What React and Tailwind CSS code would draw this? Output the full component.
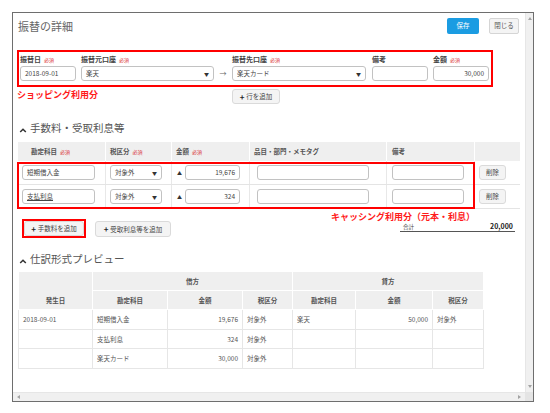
import React from "react";

const Req = () => (
  <span className="ml-[3px] text-[5px] font-normal text-[#d9343a]">必須</span>
);

const Input = ({ className = "", value = "", right = false, underline = false }) => (
  <div
    className={`h-[15px] border border-[#c2c2c2] rounded-[3px] bg-white flex items-center px-[4px] text-[6.5px] text-[#444] leading-none ${
      right ? "justify-end" : ""
    } ${className}`}
  >
    <span className={underline ? "underline" : ""}>{value}</span>
  </div>
);

const Select = ({ className = "", value }) => (
  <div
    className={`h-[15px] border border-[#c2c2c2] rounded-[3px] bg-white flex items-center pl-[4px] pr-[4px] text-[6.5px] text-[#444] leading-none ${className}`}
  >
    <span>{value}</span>
    <span className="ml-auto text-[5px] text-[#333]">▼</span>
  </div>
);

const Btn = ({ className = "", children }) => (
  <div
    className={`h-[15px] bg-[#f4f4f4] border border-[#dadada] rounded-[3px] flex items-center justify-center text-[6.5px] text-[#444] leading-none ${className}`}
  >
    {children}
  </div>
);

const Plus = () => <span className="mr-[2px] text-[8px] font-bold text-[#222]">+</span>;

const Chevron = () => (
  <svg width="8" height="6" viewBox="0 0 8 6" className="mt-[3px]">
    <path d="M1.2 5 L4 2.2 L6.8 5" fill="none" stroke="#333" strokeWidth="1.5" />
  </svg>
);

const Section = ({ title, className = "" }) => (
  <div className={`ml-[6px] h-[14px] flex items-center gap-[3px] ${className}`}>
    <Chevron />
    <span className="text-[10.5px] text-[#555] leading-none">{title}</span>
  </div>
);

const Label = ({ children, req }) => (
  <div className="h-[9px] flex items-center text-[7px] font-bold text-[#444] leading-none">
    {children}
    {req && <Req />}
  </div>
);

const feeRows = [
  { account: "短期借入金", amount: "19,676", underline: false },
  { account: "支払利息", amount: "324", underline: true },
];

const preview = [
  ["2018-09-01", "短期借入金", "19,676", "対象外", "楽天", "50,000", "対象外"],
  ["", "支払利息", "324", "対象外", "", "", ""],
  ["", "楽天カード", "30,000", "対象外", "", "", ""],
];

export default function App() {
  return (
    <div className="w-[550px] h-[413px] bg-white font-['Noto_Sans_CJK_JP','Noto_Sans',sans-serif] pt-[12px] pl-[12px]">
      <div className="w-[522px] h-[390px] border border-[#6e6e6e] flex flex-col">
        <div className="flex flex-1 min-h-0">
          {/* content */}
          <div className="flex-1 overflow-hidden">
            {/* title */}
            <div className="mt-[5px] h-[16px] flex items-center">
              <div className="ml-[5px] text-[11px] text-[#666] leading-none">振替の詳細</div>
              <div className="ml-auto mr-[6px] flex gap-[10px]">
                <div className="w-[32px] h-[16px] bg-[#1b9ce2] rounded-[2px] text-white text-[6.5px] flex items-center justify-center">
                  保存
                </div>
                <div className="w-[30px] h-[16px] bg-[#f4f4f4] border border-[#d5d5d5] rounded-[2px] text-[#555] text-[6.5px] flex items-center justify-center">
                  閉じる
                </div>
              </div>
            </div>

            {/* transfer box */}
            <div className="ml-[4px] mt-[16px] w-[476px] h-[37px] border-2 border-[#ff0000] flex pl-[1px] pt-[3px]">
              <div className="w-[56px] flex flex-col gap-[2px]">
                <Label req>振替日</Label>
                <Input className="w-[56px]" value="2018-09-01" />
              </div>
              <div className="ml-[5px] w-[133px] flex flex-col gap-[2px]">
                <Label req>振替元口座</Label>
                <Select className="w-[133px]" value="楽天" />
              </div>
              <div className="w-[18px] flex flex-col gap-[2px]">
                <div className="h-[9px]" />
                <div className="h-[15px] flex items-center justify-center text-[7px] text-[#666]">→</div>
              </div>
              <div className="w-[134px] flex flex-col gap-[2px]">
                <Label req>振替先口座</Label>
                <Select className="w-[134px]" value="楽天カード" />
              </div>
              <div className="ml-[6px] w-[56px] flex flex-col gap-[2px]">
                <Label>備考</Label>
                <Input className="w-[56px]" />
              </div>
              <div className="ml-[5px] w-[56px] flex flex-col gap-[2px]">
                <Label req>金額</Label>
                <Input className="w-[56px]" value="30,000" right />
              </div>
            </div>

            {/* shopping label + add row */}
            <div className="ml-[4px] mt-[1px] h-[16px] flex items-start">
              <div className="w-[215px] text-[9px] font-bold text-[#ff1a1a] leading-[13px]">
                ショッピング利用分
              </div>
              <Btn className="mt-[1px] w-[48px]">
                <Plus />行を追加
              </Btn>
            </div>

            <Section className="mt-[17px]" title="手数料・受取利息等" />

            {/* fee table */}
            <div className="relative ml-[5px] mt-[7px] w-[502px]">
              <div className="h-[19px] bg-[#efefef] flex text-[6.5px] font-bold text-[#555] leading-none">
                <div className="w-[88px] pl-[13px] flex items-center border-r border-white">
                  勘定科目<Req />
                </div>
                <div className="w-[66px] pl-[4px] flex items-center border-r border-white">
                  税区分<Req />
                </div>
                <div className="w-[78px] pl-[4px] flex items-center border-r border-white">
                  金額<Req />
                </div>
                <div className="w-[137px] pl-[4px] flex items-center border-r border-white">
                  品目・部門・メモタグ
                </div>
                <div className="w-[88px] pl-[5px] flex items-center border-r border-white">備考</div>
                <div className="w-[45px]" />
              </div>
              {feeRows.map((r) => (
                <div key={r.account} className="h-[24px] flex border-b border-[#e4e4e4]">
                  <div className="w-[88px] flex items-center pl-[4px] border-r border-[#e8e8e8]">
                    <Input className="w-[73px]" value={r.account} underline={r.underline} />
                  </div>
                  <div className="w-[66px] flex items-center pl-[4px] border-r border-[#e8e8e8]">
                    <Select className="w-[52px]" value="対象外" />
                  </div>
                  <div className="w-[78px] flex items-center pl-[5px] border-r border-[#e8e8e8]">
                    <span className="w-[8px] text-[5px] text-[#333]">▲</span>
                    <Input className="w-[55px]" value={r.amount} right />
                  </div>
                  <div className="w-[137px] flex items-center pl-[7px] border-r border-[#e8e8e8]">
                    <Input className="w-[112px]" />
                  </div>
                  <div className="w-[88px] flex items-center pl-[5px] border-r border-[#e8e8e8]">
                    <Input className="w-[72px]" />
                  </div>
                  <div className="w-[45px] flex items-center pl-[4px]">
                    <Btn className="w-[27px]">削除</Btn>
                  </div>
                </div>
              ))}
              <div className="absolute left-[-1px] top-[20px] w-[458px] h-[47px] border-2 border-[#ff0000]" />
            </div>

            {/* below fee table */}
            <div className="h-[31px] flex">
              <div className="ml-[9px] pt-[10px] flex items-start">
                <div className="w-[64px] h-[19px] border-2 border-[#ff0000]">
                  <Btn className="w-[60px]">
                    <Plus />手数料を追加
                  </Btn>
                </div>
                <Btn className="ml-[9px] mt-[2px] w-[76px] h-[16px]">
                  <Plus />受取利息等を追加
                </Btn>
              </div>
              <div className="ml-auto mr-[10px] flex flex-col items-end">
                <div className="mt-[2px] mr-[40px] text-[9px] font-bold text-[#ff1a1a] leading-[12px]">
                  キャッシング利用分（元本・利息）
                </div>
                <div className="w-[115px] h-[9px] border-b border-[#555] flex items-end justify-between pb-[1px] leading-none">
                  <span className="pl-[3px] text-[5.5px] text-[#444]">合計</span>
                  <span className="pr-[2px] text-[7px] font-bold text-[#222]">20,000</span>
                </div>
              </div>
            </div>

            <Section className="mt-[12px]" title="仕訳形式プレビュー" />

            {/* preview table */}
            <table className="ml-[5px] mt-[5px] w-[465px] table-fixed border-collapse text-[6.5px] text-[#555] leading-none">
              <colgroup>
                <col className="w-[74px]" />
                <col className="w-[75px]" />
                <col className="w-[75px]" />
                <col className="w-[50px]" />
                <col className="w-[63px]" />
                <col className="w-[77px]" />
                <col className="w-[51px]" />
              </colgroup>
              <thead>
                <tr className="h-[19px] bg-[#efefef] font-bold">
                  <th rowSpan={2} className="border border-white font-bold align-bottom pb-[6px]">
                    発生日
                  </th>
                  <th colSpan={3} className="border border-white font-bold">
                    借方
                  </th>
                  <th colSpan={3} className="border border-white font-bold">
                    貸方
                  </th>
                </tr>
                <tr className="h-[19px] bg-[#efefef]">
                  {["勘定科目", "金額", "税区分", "勘定科目", "金額", "税区分"].map((h, i) => (
                    <th key={i} className="border border-white font-bold">
                      {h}
                    </th>
                  ))}
                </tr>
              </thead>
              <tbody>
                {preview.map((row, ri) => (
                  <tr key={ri} className={ri === 1 ? "h-[19px]" : "h-[20px]"}>
                    {row.map((c, ci) => (
                      <td
                        key={ci}
                        className={`border border-[#e6e6e6] ${
                          ci === 2 || ci === 5 ? "text-right pr-[4px]" : "text-left pl-[4px]"
                        }`}
                      >
                        {c}
                      </td>
                    ))}
                  </tr>
                ))}
              </tbody>
            </table>
          </div>

          {/* vertical scrollbar */}
          <div className="w-[8px] bg-[#f0f0f0] border-l border-[#e6e6e6] flex flex-col items-center justify-between py-[4px]">
            <svg width="4" height="3" viewBox="0 0 4 3">
              <path d="M0 3 L2 0 L4 3 Z" fill="#a3a3a3" />
            </svg>
            <svg width="4" height="3" viewBox="0 0 4 3">
              <path d="M0 0 L2 3 L4 0 Z" fill="#a3a3a3" />
            </svg>
          </div>
        </div>

        {/* horizontal scrollbar */}
        <div className="h-[9px] flex">
          <div className="flex-1 bg-[#f0f0f0] border-t border-[#e6e6e6] flex items-center justify-between px-[4px]">
            <svg width="3" height="4" viewBox="0 0 3 4">
              <path d="M3 0 L0 2 L3 4 Z" fill="#a3a3a3" />
            </svg>
            <svg width="3" height="4" viewBox="0 0 3 4">
              <path d="M0 0 L3 2 L0 4 Z" fill="#a3a3a3" />
            </svg>
          </div>
          <div className="w-[8px] bg-[#e4e4e4]" />
        </div>
      </div>
    </div>
  );
}
